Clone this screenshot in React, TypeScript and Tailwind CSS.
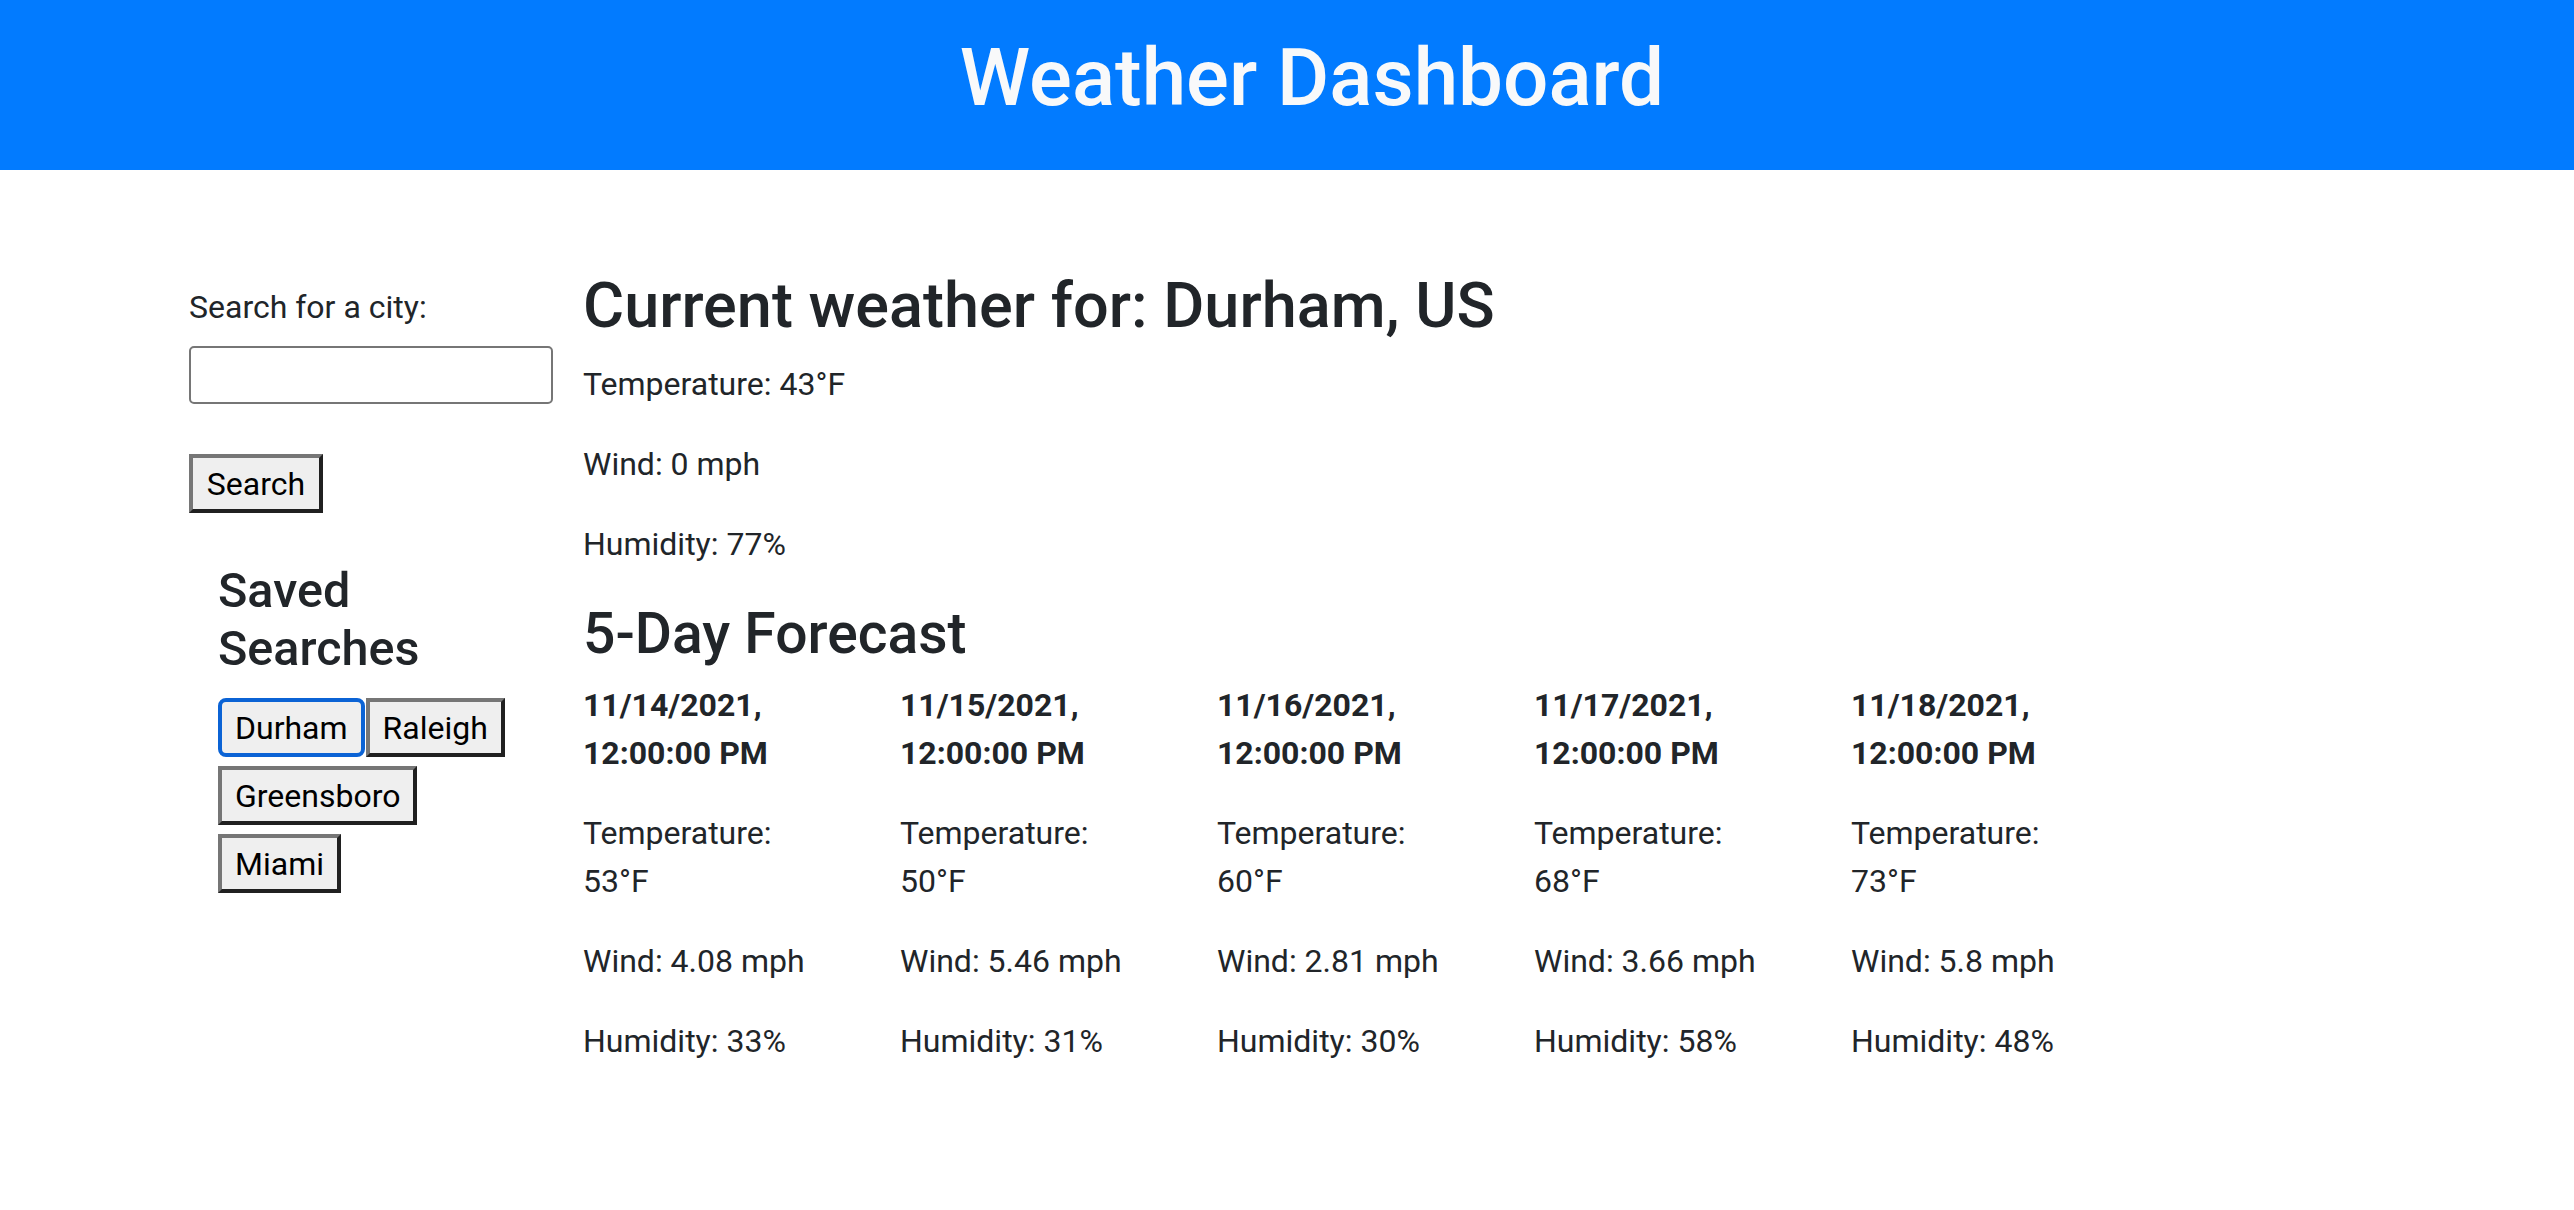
import { useState } from 'react';

type Day = {
  date: string;
  time: string;
  temp: number;
  wind: string;
  humidity: number;
};

const forecast: Day[] = [
  { date: '11/14/2021,', time: '12:00:00 PM', temp: 53, wind: '4.08', humidity: 33 },
  { date: '11/15/2021,', time: '12:00:00 PM', temp: 50, wind: '5.46', humidity: 31 },
  { date: '11/16/2021,', time: '12:00:00 PM', temp: 60, wind: '2.81', humidity: 30 },
  { date: '11/17/2021,', time: '12:00:00 PM', temp: 68, wind: '3.66', humidity: 58 },
  { date: '11/18/2021,', time: '12:00:00 PM', temp: 73, wind: '5.8', humidity: 48 },
];

const saved = ['Durham', 'Raleigh', 'Greensboro', 'Miami'];

// native-looking outset button, like an unstyled <button> in the browser
const btn =
  'flex h-[59px] items-center justify-center border-4 border-t-[#767676] border-l-[#767676] border-r-[#202020] border-b-[#202020] bg-[#efefef] px-[13px] text-[32px] leading-none text-black';

export default function App() {
  const [city, setCity] = useState('');
  const [active, setActive] = useState('Durham');

  return (
    <div className="min-h-[1210px] bg-white font-['Roboto','Liberation_Sans',sans-serif] text-[#212529]">
      <header className="flex h-[170px] items-center justify-center bg-[#027bff] pb-[14px] pl-[50px]">
        <h1 className="text-[80px] font-medium leading-none text-[#f8f9fa]">
          Weather Dashboard
        </h1>
      </header>

      <div className="flex items-start pl-[189px]">
        {/* sidebar: search form + saved cities */}
        <aside className="w-[394px] shrink-0 pt-[113px]">
          <label htmlFor="city" className="mb-[15px] block text-[32px] leading-[48px]">
            Search for a city:
          </label>
          <input
            id="city"
            value={city}
            onChange={(e) => setCity(e.target.value)}
            className="block h-[58px] w-[364px] rounded-[5px] border-2 border-[#767676] bg-white px-3 text-[32px] outline-none"
          />
          <button type="button" className={`${btn} mt-[50px] w-[134px]`}>
            Search
          </button>

          <div className="mt-[49px] pl-[29px]">
            <h4 className="text-[48.5px] font-medium leading-[58px]">
              Saved
              <br />
              Searches
            </h4>
            <div className="mt-[20px] flex w-[306px] flex-wrap gap-x-[1px] gap-y-[9px]">
              {saved.map((name) =>
                name === active ? (
                  <button
                    key={name}
                    type="button"
                    className="flex h-[59px] items-center justify-center rounded-[8px] border-4 border-[#0b63d5] bg-[#efefef] px-[13px] text-[32px] leading-none text-black"
                  >
                    {name}
                  </button>
                ) : (
                  <button key={name} type="button" onClick={() => setActive(name)} className={btn}>
                    {name}
                  </button>
                ),
              )}
            </div>
          </div>
        </aside>

        {/* current conditions + forecast */}
        <main className="flex-1 pt-[96px]">
          <h2 className="mb-[15px] text-[63px] font-medium leading-[79px]">
            Current weather for: Durham, US
          </h2>
          <div className="text-[32px] leading-[48px]">
            <p className="mb-[32px]">Temperature: 43°F</p>
            <p className="mb-[32px]">Wind: 0 mph</p>
            <p className="mb-[32px]">Humidity: 77%</p>
          </div>

          <h3 className="mb-[13px] text-[57px] font-medium leading-[68px]">5-Day Forecast</h3>
          <div className="grid grid-cols-[repeat(5,317px)] text-[32px] leading-[48px]">
            {forecast.map((d) => (
              <div key={d.date} className="pr-[72px]">
                <p className="mb-[32px] font-bold">
                  {d.date}
                  <br />
                  {d.time}
                </p>
                <p className="mb-[32px]">Temperature: {d.temp}°F</p>
                <p className="mb-[32px]">Wind: {d.wind} mph</p>
                <p className="mb-[32px]">Humidity: {d.humidity}%</p>
              </div>
            ))}
          </div>
        </main>
      </div>
    </div>
  );
}
